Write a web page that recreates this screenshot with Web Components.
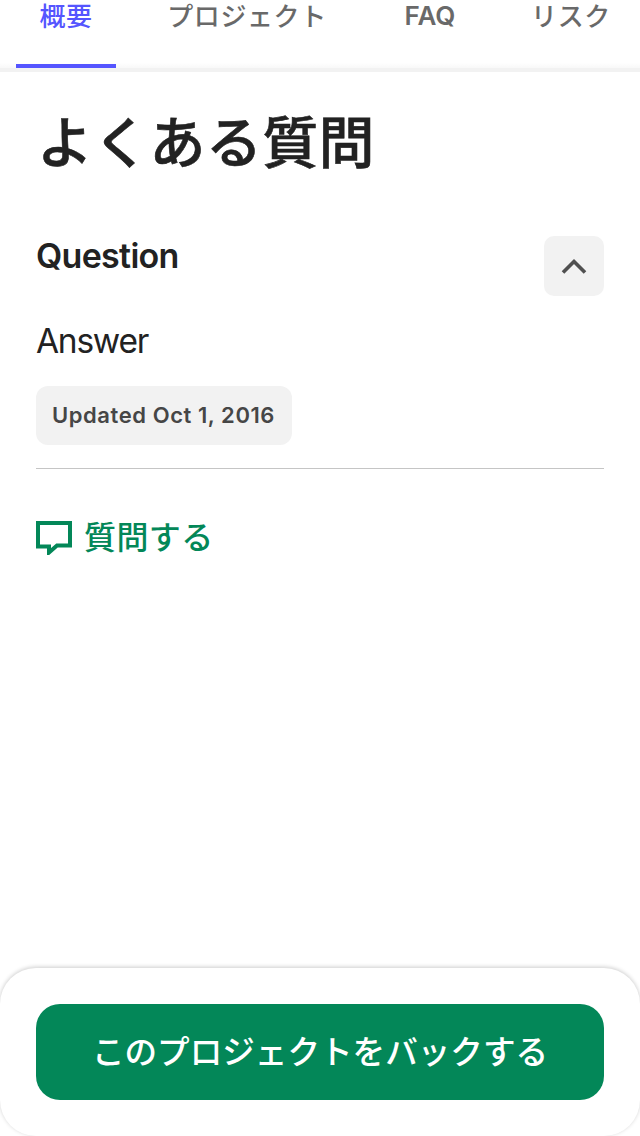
<!DOCTYPE html>
<html lang="ja">
<head>
<meta charset="utf-8">
<title>よくある質問</title>
<style>
body{margin:0;background:#fff;color:#222;font-family:"Noto Sans CJK JP",sans-serif}
</style>
</head>
<body>
<faq-page>
  <tab-bar slot="tabs">
    <tab-item active style="--w:100px">概要</tab-item>
    <tab-item style="--w:206px">プロジェクト</tab-item>
    <tab-item latin style="--w:104px">FAQ</tab-item>
    <tab-item style="--w:122px">リスク</tab-item>
  </tab-bar>
  <faq-title>よくある質問</faq-title>
  <faq-entry>
    <span slot="question">Question</span>
    <span slot="answer">Answer</span>
    <span slot="date">Updated Oct 1, 2016</span>
  </faq-entry>
  <ask-link>質問する</ask-link>
  <pledge-bar slot="footer">このプロジェクトをバックする</pledge-bar>
</faq-page>
<script>
function define(name, markup) {
  const template = document.createElement('template');
  template.innerHTML = markup;
  customElements.define(name, class extends HTMLElement {
    constructor() {
      super();
      this.attachShadow({mode: 'open'}).append(template.content.cloneNode(true));
    }
  });
}
define('faq-page', `<style>
:host{display:flex;flex-direction:column;height:1136px;overflow:hidden}
main{flex:1;padding:0 36px}
</style><slot name="tabs"></slot><main><slot></slot></main><slot name="footer"></slot>`);
define('tab-bar', `<style>
:host{display:flex;height:68px;gap:28px;padding:0 16px;white-space:nowrap;border-bottom:4px solid #f2f2f2;background:linear-gradient(#fff 63px,#f8f8f8 68px) padding-box}
</style><slot></slot>`);
define('tab-item', `<style>
:host{box-sizing:border-box;flex:none;width:var(--w);height:68px;text-align:center;font-family:"Liberation Sans","Noto Sans CJK JP",sans-serif;font-weight:500;font-size:26px;line-height:35px;letter-spacing:.6px;color:#696969}
:host([active]){color:#5555ff;border-bottom:4px solid #5555ff}
:host([latin]){font-family:Inter,sans-serif;font-weight:600;line-height:32px;letter-spacing:0}
</style><slot></slot>`);
define('faq-title', `<style>
:host{display:block;height:164px;padding-left:1px;box-sizing:border-box;font-size:56px;font-weight:500;line-height:133px;letter-spacing:.3px;-webkit-text-stroke:.6px #222}
h1{margin:0;font:inherit}
</style><h1><slot></slot></h1>`);
define('faq-entry', `<style>
:host{display:block;height:232px;border-bottom:1px solid #c5c5c5;font-family:Inter,sans-serif}
header{display:flex;justify-content:space-between;height:60px}
h2{margin:0;font-size:34px;font-weight:600;line-height:40px;letter-spacing:-.7px}
button{width:60px;height:60px;border:0;border-radius:10px;background:#f2f2f2;padding:0}
svg{display:block}
p{margin:25px 0 0;font-size:33.5px;line-height:41px;height:40px;letter-spacing:-1.25px}
time{display:block;box-sizing:border-box;width:256px;height:59px;margin-top:25px;border-radius:12px;background:#f2f2f2;color:#464646;font-size:22px;font-weight:600;line-height:59px;padding-left:16px;letter-spacing:.57px;white-space:nowrap}
</style><header><h2><slot name="question"></slot></h2><button aria-expanded="true"><svg width="60" height="60" fill="none" stroke="#505050" stroke-width="3.6"><path d="M19 36.5 30 25.5 41 36.5"/></svg></button></header>
<p><slot name="answer"></slot></p><time><slot name="date"></slot></time>`);
define('ask-link', `<style>
:host{display:flex;align-items:flex-start;gap:12px;margin-top:44px;color:#038758;font-size:32px;font-weight:500;line-height:44px;letter-spacing:.4px}
svg{flex:none;margin-top:8px}
</style><svg width="36" height="34" fill="none" stroke="#038758" stroke-width="4"><path d="M2 2H34V24.5H21L13 31.5V25.5H2Z"/></svg><span><slot></slot></span>`);
define('pledge-bar', `<style>
:host{display:block;box-sizing:border-box;height:168px;padding:36px;border-radius:36px;background:#fff;box-shadow:0 -1px 4px rgba(0,0,0,.2)}
button{display:block;width:568px;height:96px;padding:0 0 4px;border:0;border-radius:24px;background:#038758;color:#fff;font:500 32.6px/92px "Noto Sans CJK JP",sans-serif;white-space:nowrap}
</style><button><slot></slot></button>`);
</script>
</body>
</html>
